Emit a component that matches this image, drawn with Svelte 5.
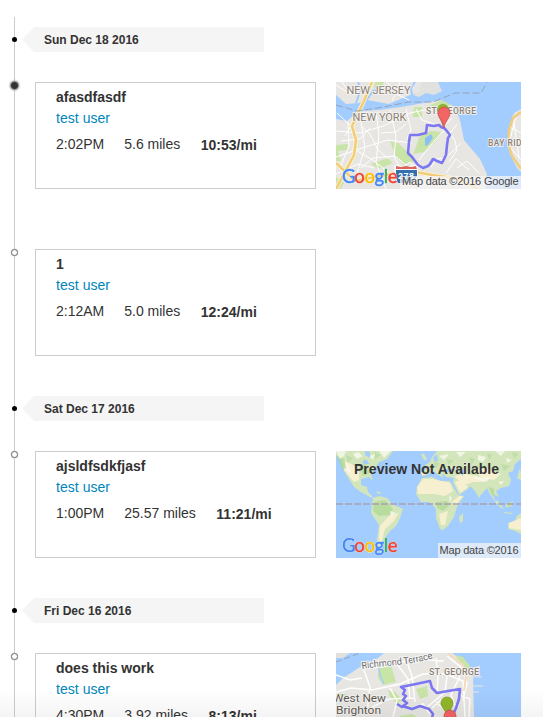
<script>
  const days = [
    {
      date: 'Sun Dec 18 2016',
      runs: [
        { title: 'afasdfasdf', time: '2:02PM', distance: '5.6 miles', pace: '10:53/mi', map: 'island', active: true },
        { title: '1', time: '2:12AM', distance: '5.0 miles', pace: '12:24/mi' }
      ]
    },
    {
      date: 'Sat Dec 17 2016',
      runs: [{ title: 'ajsldfsdkfjasf', time: '1:00PM', distance: '25.57 miles', pace: '11:21/mi', map: 'world' }]
    },
    {
      date: 'Fri Dec 16 2016',
      runs: [{ title: 'does this work', time: '4:30PM', distance: '3.92 miles', pace: '8:13/mi', map: 'brighton' }]
    }
  ];
</script>

{#snippet logo()}
  <text class="logo" y="100.5"
    ><tspan x="6" fill="#4285f4" stroke="#4285f4">G</tspan><tspan x="18.2" fill="#ea4335" stroke="#ea4335">o</tspan><tspan x="28.4" fill="#fbbc05" stroke="#fbbc05">o</tspan><tspan x="38.6" fill="#4285f4" stroke="#4285f4">g</tspan><tspan x="47.7" fill="#34a853" stroke="#34a853">l</tspan><tspan x="51.7" fill="#ea4335" stroke="#ea4335">e</tspan></text>
{/snippet}

{#snippet island()}
  <rect width="185" height="107" fill="#e8e6e2" />
  <path fill="#c9e4a7" d="M39 0H48L45 8L38 6ZM0 63L12 62L11 68L2 69L5 79H0ZM54 59L62 61L74 72L79 79L68 83L60 75ZM84 54L95 49L106 50L98 61L88 70L77 72ZM78 25H86V35H77ZM93 24L108 17L116 23L102 27ZM35 82L52 76L57 81L43 87ZM0 95L8 101L4 107H0Z" />
  <path fill="#a3ccff" d="M0 13L10 22L23 21L31 18L53 22L74 13L92 8L94 0H185V27L178 31L174 42L171 61L174 72L181 86L185 90V107H149L151 92L144 77L128 58L124 38L119 25L106 18L88 21L65 25L43 28L27 29L18 33L11 39L0 37Z" />
  <path fill="#e1e1df" d="M77 13L84 9L85 0H102L106 9L98 13L90 11L83 15Z" />
  <path fill="none" stroke="#a3ccff" stroke-width="2" d="M20 21L25 7L22 0M30 19L37 9L49 6M76 13L75 6L79 0" />
  <path fill="#8cc0f5" d="M89 56L95 52L97 56L92 63L89 64Z" />
  <g fill="none" stroke="#fff" stroke-width="1">
    <path d="M0 49L24 51L47 44L74 31L103 25L118 31M0 75L29 65L52 58L76 61M12 40L13 64L4 86M24 34L29 66L20 94M40 30L43 53L40 80L50 107M54 28L60 54L58 75L66 88L78 98M70 27L75 48L71 57M5 59L24 57L34 46M25 86L37 76L59 74L70 83M45 51L60 50L70 42M80 27L86 38L98 42M116 36L109 43L107 51M121 42L114 51L119 59L121 68L113 80M102 81L114 72L125 61M110 91L120 77L133 88M121 86L131 79L143 91M95 85L101 77L109 76M62 89L74 80L83 91M0 92L22 82L38 86M1 31L15 44L9 54M0 3L13 11L30 10M6 0L14 11M50 0L61 9L56 19M64 0L60 12L73 18" />
    <path d="M174 45L185 51M173 58L185 64M177 34L183 76M181 31L173 61M174 65L185 78M25 44L34 52L42 68L53 77M16 66L37 78L58 95M83 78L94 64L106 50" />
  </g>
  <g fill="none" stroke="#fff4d0" stroke-width="4.2"><path d="M36 0L27 21L16 44L20 58L18 73L0 107M0 81L19 99L44 94L60 91L80 90L96 93L124 97L142 107" /></g>
  <g fill="none" stroke="#f1cd7b" stroke-width="2.5"><path d="M36 0L27 21L16 44L20 58L18 73L0 107M0 81L19 99L44 94L60 91L80 90L96 93L124 97L142 107M185 30L177 36L173 48L172 61L176 74L185 87" /></g>
  <path fill="none" stroke="#9299a3" stroke-width=".8" stroke-dasharray="7 3" d="M0 23L21 29L48 25L72 20L97 20L119 11L145 11L151 0" />
  <g class="place" font-size="11">
    <text x="10.5" y="11.5" textLength="64">NEW JERSEY</text>
    <text x="16.5" y="38.5" textLength="54">NEW YORK</text>
    <text class="strong" x="90" y="32" textLength="50" font-size="8.5">ST. GEORGE</text>
    <text class="strong" x="152" y="64" textLength="45" font-size="8.5">BAY RIDGE</text>
  </g>
  <path class="route" d="M108 46L105 45L103 43L98 44L91 43L90 51L82 53L74 53L73 60L72 71L76 75L79 79L82 83L87 86L92 84L94 82L97 77L101 79L106 81L110 73L111 63L112 56L114 53L110 48Z" />
  <path fill="#91b62a" stroke="#708a2d" stroke-width=".5" d="M107 44L102 30A5.5 5.5 0 1 1 112 30Z" />
  <path fill="#f36565" stroke="#c54747" stroke-width=".7" d="M108 46C107 39 102 36 102 31A6 6 0 1 1 114 31C114 36 109 39 108 46Z" />
  <path fill="#fff" d="M58 84L62 83L70 85L78 83L82 84V94L74 104L60 99Z" />
  <path fill="#3470ae" d="M60 88H81V94L76 101H62L60 96Z" />
  <path fill="#d9665b" d="M60 84L65 85L70 84L75 85L80 84L81 87H60Z" />
  <text x="62" y="96.5" textLength="16" font-size="9" font-weight="bold" fill="#fff">278</text>
  {@render logo()}
  <rect x="64" y="94" width="121" height="13" fill="#f5f5f5" opacity=".76" />
  <text class="credit" x="66" y="103" textLength="116.5">Map data ©2016 Google</text>
{/snippet}

{#snippet world()}
  <rect width="185" height="107" fill="#a3ccff" />
  <g fill="#d3e6bb">
    <path d="M0 0H57L51 8L43 11L38 19L35 23L37 30L33 26L25 28L25 34L31 36L32 41L38 47L34 46L25 41L18 36L8 20L5 9L0 5Z" />
    <path d="M37 47L43 45L51 47L56 53L67 58L64 67L60 75L54 80L49 87L45 94L47 103L41 99L41 88L43 74L35 62L36 53Z" />
    <path d="M80 43L81 36L86 27L96 26L104 30L114 30L118 37L122 44L128 45L121 56L118 66L112 75L107 79L104 78L100 67L100 58L96 53L92 51L85 51Z" />
    <path d="M86 25V20L91 18L89 14L94 11L96 6L101 0H185V8L179 13L177 20L172 22L175 29L173 35L165 37L160 40L163 46L157 43L160 52L154 43L151 37L144 45L143 47L139 40L134 35L132 38L123 44L117 31L118 27L110 26L106 22L107 27L100 22L96 20L91 24Z" />
    <path d="M172 78L172 72L179 70L181 65L185 62V83L179 80ZM161 49L168 58L165 57L159 51ZM170 53L177 50L175 56L170 56ZM123 66L127 62L127 70L124 72ZM88 9L85 4L88 2L91 9ZM181 27L184 17L185 22V29ZM40 40L46 42L42 43ZM168 61L177 62L176 63L167 62Z" />
  </g>
  <g fill="#f7f0d0">
    <path d="M9 10L17 14L23 20L23 29L18 31L8 19ZM81 36L87 28L97 28L114 32L117 40L109 45L98 43L82 43ZM119 31L124 29L132 36L124 42ZM118 25L130 23L144 26L149 31L137 31L128 34ZM137 18L151 17L165 23L158 29L146 27ZM173 72L185 67V79L173 77ZM53 65L63 62L57 71L49 78L45 93L43 87L44 75ZM103 63L112 60L109 74L105 74ZM123 45L127 45L120 54L116 51ZM85 21H91L89 24H86Z" />
  </g>
  <path fill="#a6d58b" opacity=".6" d="M38 51L49 49L57 58L54 64L43 65L37 60ZM100 51L111 50L113 55L107 60L101 57ZM152 36L158 38L158 46L163 51L156 44ZM171 52L176 51L173 57ZM0 4L7 7L12 17L6 18ZM24 16L31 17L34 22L27 25Z" />
  <g fill="#fbfaf1" opacity=".75"><path d="M0 0H10L8 5L4 8L2 4ZM9 11L13 15L15 24L10 18ZM17 3L22 1L27 5L21 8ZM33 5L39 3L37 9ZM43 0H55L48 7ZM103 5L113 3L108 9ZM120 1H130L124 6ZM142 4L150 6L147 11L142 9ZM159 0H169L165 5ZM170 7L176 9L171 12ZM127 11L132 12L129 16ZM115 15L122 16L117 19ZM137 24L146 27L155 26L150 31L140 28ZM54 60L60 62L55 66ZM113 44L116 47L114 52ZM162 31L168 30L165 34Z" /></g>
  <g fill="#b8d99f" opacity=".7"><path d="M10 4L17 7L12 12ZM28 7L33 12L27 17ZM39 1L45 4L39 8ZM97 11L104 12L100 17ZM111 8L118 10L112 14ZM133 6L139 8L136 13ZM151 2L156 4L153 9ZM165 13L174 15L168 20ZM176 1L183 3L178 7Z" /></g>
  <path fill="#a3ccff" d="M26 10L31 9L33 13L28 13ZM29 0L34 1L34 7L29 4ZM109 18L117 18L115 22L108 20ZM124 16L128 20L127 25L123 21ZM97 7L101 3L102 10L99 11Z" />
  <path fill="none" stroke="#aaa0b3" stroke-width="1.6" stroke-dasharray="7 2" d="M0 53H185" />
  {@render logo()}
  <text x="18" y="23" textLength="145" font-size="14" font-weight="bold" fill="#333">Preview Not Available</text>
  <rect x="102" y="92" width="83" height="15" fill="#f5f5f5" opacity=".72" />
  <text class="credit" x="103.5" y="103" textLength="79">Map data ©2016</text>
{/snippet}

{#snippet brighton()}
  <rect width="185" height="107" fill="#e8e6e2" />
  <path fill="#a3ccff" d="M0 0H48L42 5L27 12L15 20L7 25L0 32ZM116 0H185V107H139L137 23L131 11Z" />
  <path fill="#e1e1df" d="M0 0H14L7 5H0Z" />
  <path fill="#c9e4a7" d="M42 15L55 12L60 29L47 32L42 25ZM52 37L59 39L66 47L62 51L54 44ZM80 36L91 33L92 43L84 46ZM64 63L76 61L81 64V73H64ZM119 2L127 4L134 13L132 20ZM2 40L11 41L9 45L0 43Z" />
  <path fill="none" stroke="#a3ccff" stroke-width="1.5" d="M43 14L44 22L48 31" />
  <path fill="none" stroke="#e8e6e2" stroke-width="1" d="M136 16L144 13M136 24H146M136 33H147M136 39H143" />
  <g fill="none" stroke="#fff" stroke-width="1.5"><path d="M0 39L15 35L36 37L64 31L87 21L110 21L127 28L129 64M26 12L34 34L31 60M61 11L72 26L74 46M71 9L76 23L79 49M100 5L102 23L101 40M112 15L109 39L90 55M124 23L115 42L120 55M54 35L61 48L57 64M96 55L105 47L123 53M76 55L87 51L94 61M111 3L126 15L131 30L127 47M37 15L56 12L77 6L108 8M36 54L53 46L78 45M0 22L14 27L26 25M100 49L111 59M124 42L134 46L133 64" /></g>
  <path fill="none" stroke="#f3dbc0" stroke-width="2" d="M112 0L127 12L130 24L128 38" />
  <path fill="none" stroke="#9299a3" stroke-width=".8" stroke-dasharray="6 3" d="M0 9L24 0" />
  <path id="terrace" fill="none" d="M26 16C50 12 75 13 100 4" />
  <text font-size="9.5" fill="#6d6d6d" stroke="#f5f5f5" stroke-width="2" paint-order="stroke" font-family="Roboto, sans-serif"><textPath href="#terrace" textLength="72">Richmond Terrace</textPath></text>
  <g class="place"><text class="strong" x="93" y="22" textLength="50" font-size="9">ST. GEORGE</text></g>
  <g class="place town" font-size="11.5"><text x="-3" y="49" textLength="53" lengthAdjust="spacingAndGlyphs">West New</text><text x="0" y="61" textLength="45" lengthAdjust="spacingAndGlyphs">Brighton</text></g>
  <path class="route" d="M61 51L66 54L71 50L67 47L70 43L67 41L69 37L65 34L80 31L94 28L96 35L101 40L112 38L124 36L123 46L120 55L116 64M66 53L76 56L84 53L93 56L97 61L96 65" />
  <path fill="#91b62a" stroke="#769723" stroke-width=".7" d="M112 65C111 58 105 55 105 50A6 6 0 1 1 117 50C117 55 112 58 112 65Z" />
  <path fill="#f36565" stroke="#c54747" stroke-width=".7" d="M114 77C113 70 108 68 108 63A6 6 0 1 1 120 63C120 68 115 70 114 77Z" />
{/snippet}

<main>
  <div class="timeline">
    {#each days as day}
      <section>
        <header><i class="day-dot"></i><h2>{day.date}</h2></header>
        <div class="runs">
          {#each day.runs as run}
            <article>
              <i class="marker" class:active={run.active}></i>
              <div class="card">
                <h3>{run.title}</h3>
                <span class="user">test user</span>
                <div class="stats"><span>{run.time}</span><span>{run.distance}</span><strong>{run.pace}</strong></div>
              </div>
              {#if run.map}
                <svg class="map" viewBox="0 0 185 107">
                  {#if run.map === 'island'}{@render island()}{:else if run.map === 'world'}{@render world()}{:else}{@render brighton()}{/if}
                </svg>
              {/if}
            </article>
          {/each}
        </div>
      </section>
    {/each}
  </div>
  <div class="shade"></div>
</main>

<style>
  main { position: relative; box-sizing: border-box; height: 717px; padding: 17px 0 0 14px; overflow: hidden; background: #fff; color: #333; font: 14px/20px "Liberation Sans", Arial, sans-serif; }
  .timeline { display: flex; flex-direction: column; gap: 40px; padding-top: 10px; border-left: 1px solid #ccc; }
  header { position: relative; display: flex; padding-left: 7px; }
  h2, h3 { margin: 0; }
  h2 { box-sizing: border-box; width: 242px; height: 25px; padding: 1px 0 0 22px; background: #f5f5f5; clip-path: polygon(0 50%, 12px 0, 100% 0, 100% 100%, 12px 100%); font-size: 12px; line-height: 25px; }
  .day-dot { position: absolute; left: -3px; top: 10px; width: 5px; height: 5px; border-radius: 50%; background: #000; }
  .runs { display: flex; flex-direction: column; gap: 60px; padding-top: 30px; }
  article { position: relative; display: flex; gap: 20px; padding-left: 20px; }
  .marker { position: absolute; box-sizing: border-box; left: -4px; top: 0; width: 7px; height: 7px; border: 1px solid #777; border-radius: 50%; background: #fff; box-shadow: 0 0 1px #999; }
  .marker.active { border-color: #333; background: #333; box-shadow: 0 0 2px 1px #666; }
  .card { box-sizing: border-box; width: 281px; height: 107px; padding: 4px 20px; border: 1px solid #ccc; }
  h3 { font-size: 14px; line-height: 20px; }
  .user { display: block; padding-top: 1px; color: #0085ba; letter-spacing: .04px; }
  .stats { display: flex; gap: 20px; padding-top: 6px; }
  .stats strong { padding: 1px 0 0 .5px; }
  .map { display: block; width: 185px; height: 107px; overflow: hidden; font-family: "Liberation Sans", Arial, sans-serif; }
  .logo { font: 400 18.5px Lato, sans-serif; stroke-width: .5px; filter: drop-shadow(0 0 .7px #fff) drop-shadow(0 0 .7px #fff); }
  .credit { font-size: 11px; fill: #444; }
  .place { fill: #8c7e71; stroke: #f5f5f5; stroke-width: 1.6px; paint-order: stroke; font-family: Roboto, sans-serif; }
  .town { fill: #625950; }
  .strong { font-weight: 500; }
  .route { fill: none; stroke: #7b78f2; stroke-width: 2.6px; stroke-linejoin: round; }
  .shade { position: absolute; inset: auto 0 0; height: 28px; background: linear-gradient(transparent, rgba(0, 0, 0, .045)); }
</style>
